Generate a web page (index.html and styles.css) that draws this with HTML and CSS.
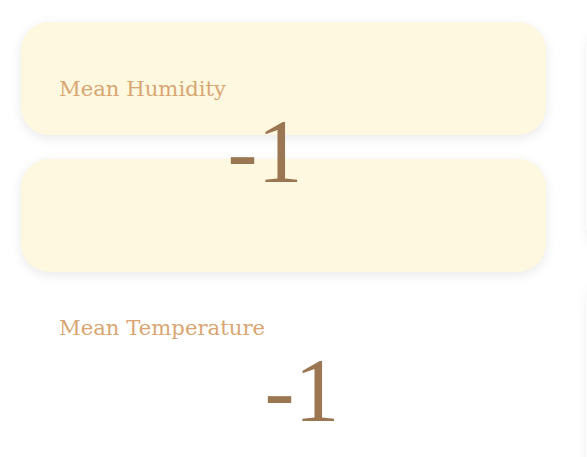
FILE: index.html
```html
<!DOCTYPE html>
<html lang="en">
<head>
  <meta charset="UTF-8" />
  <meta name="viewport" content="width=device-width, initial-scale=1" />
  <title>Weather Stats</title>
  <link rel="stylesheet" href="styles.css">
</head>
<body>

<div class="board">
  <div class="column">
    <section class="widget widget-filled">
      <h3 class="widget-label">Mean Humidity</h3>
      <div class="widget-value value-left">-1</div>
    </section>

    <section class="widget widget-filled"></section>

    <section class="widget widget-plain">
      <h3 class="widget-label">Mean Temperature</h3>
      <div class="widget-value value-right">-1</div>
    </section>
  </div>

  <div class="column column-side">
    <section class="widget widget-side"></section>
    <section class="widget widget-side"></section>
  </div>
</div>

</body>
</html>
```

FILE: styles.css
```css
* { box-sizing: border-box; }
body {
  margin: 0;
  background: white;
  font-family: "DejaVu Serif", "Liberation Serif", serif;
  overflow: hidden;
}
.board {
  display: flex;
  gap: 40px;
  padding: 22px 0 0 21px;
}
/* plain block column so the big numbers can spill over the next card */
.column {
  flex: 0 0 525px;
}
.widget {
  height: 113px;
  margin-bottom: 24px;
  border-radius: 28px;
  padding: 0 38px;
}
.widget-filled {
  background: #fdf8df;
  box-shadow: 0 3px 12px rgba(0,0,0,0.09);
}
.widget-side {
  height: 230px;
  background: white;
  box-shadow: 0 3px 12px rgba(0,0,0,0.07);
}
.widget-label {
  margin: 0;
  padding-top: 54px;
  font-size: 21.2px;
  font-weight: normal;
  line-height: 26px;
  color: #d9a673;
}
.widget-plain .widget-label {
  padding-top: 19px;
}
.widget-value {
  margin-top: 5px;
  font-family: "Liberation Serif", serif;
  font-size: 90px;
  line-height: 90px;
  color: #9b7653;
  text-align: center;
}
.value-left { padding-right: 37px; }
.value-right { padding-left: 37px; }
```
